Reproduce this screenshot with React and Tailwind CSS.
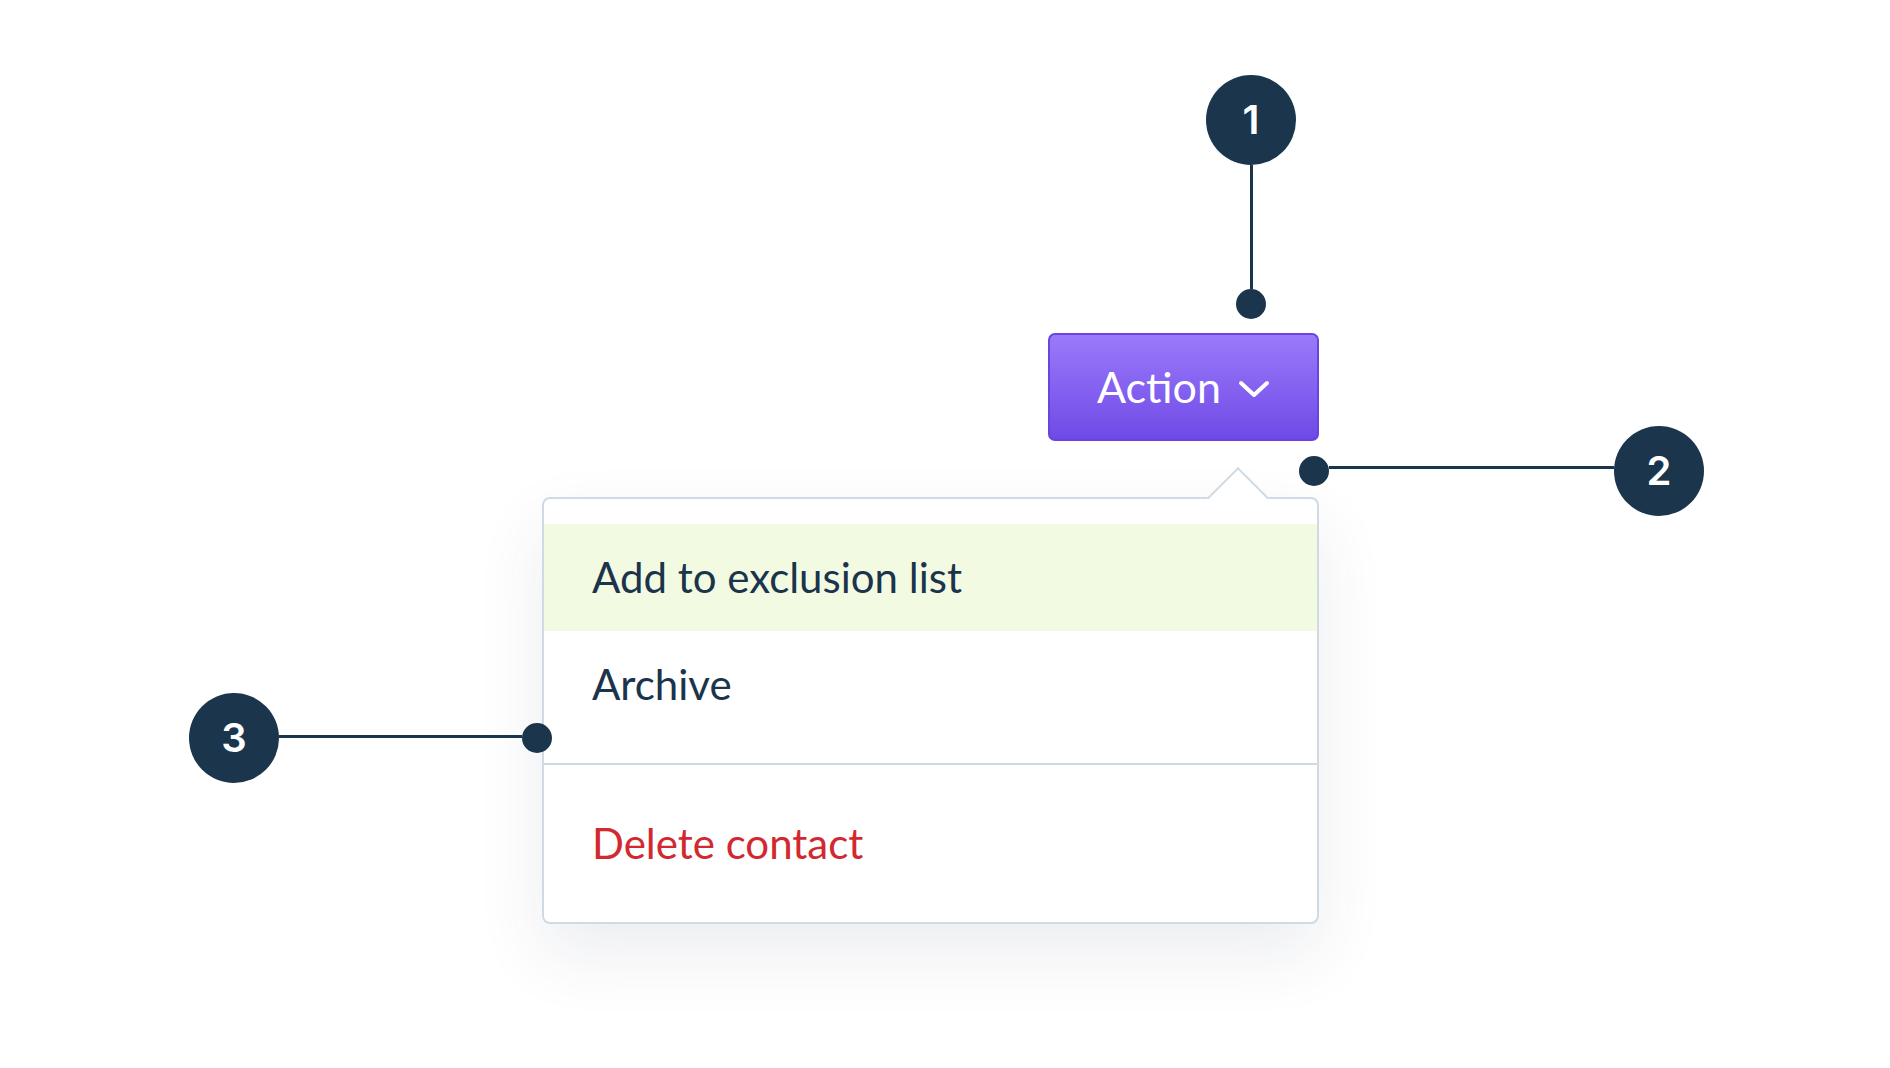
function Marker({ n }) {
  return (
    <div className="w-[90px] h-[90px] shrink-0 rounded-full bg-[#1b354c] flex items-center justify-center text-white text-[40px] font-semibold leading-none" style={{ fontFamily: 'Inter, sans-serif' }}>
      {n}
    </div>
  );
}

function Dot() {
  return <div className="w-[30px] h-[30px] shrink-0 rounded-full bg-[#1b354c]" />;
}

export default function App() {
  return (
    <div className="relative w-[1890px] h-[1068px] bg-white overflow-hidden" style={{ fontFamily: 'Lato, sans-serif' }}>
      <div className="flex flex-col items-end w-[777px] ml-[542px] pt-[333px]">
        <button className="w-[271px] h-[108px] rounded-[7px] border-2 border-[#6a44dc] bg-gradient-to-b from-[#9b79fa] to-[#7049e6] flex items-center justify-center gap-[17px] text-white text-[43px]">
          <span className="leading-none pb-[2px]">Action</span>
          <svg width="32" height="18" viewBox="0 0 32 18" fill="none" className="mt-[4px]">
            <polyline points="3,3 16,15 29,3" stroke="white" strokeWidth="4" strokeLinecap="round" strokeLinejoin="round" />
          </svg>
        </button>

        <div className="relative mt-[56px] w-full bg-white border-2 border-[#cfdae4] rounded-[8px] shadow-[0_30px_70px_rgba(40,60,90,0.09)] text-[42px]">
          <div className="absolute left-[661px] top-[-34px] w-[66px] h-[34px] overflow-hidden">
            <div className="absolute left-[11px] top-[11px] w-[44px] h-[44px] rotate-45 bg-white border-l-2 border-t-2 border-[#cfdae4]" />
          </div>
          <div className="py-[25px]">
            <div className="h-[107px] bg-[#f2fae2] flex items-center pl-[48px] text-[#1b344b]">Add to exclusion list</div>
            <div className="h-[107px] flex items-center pl-[48px] text-[#1b344b]">Archive</div>
          </div>
          <div className="border-t-2 border-[#cfdae4] py-[25px]">
            <div className="h-[107px] flex items-center pl-[48px] text-[#d1292f]">Delete contact</div>
          </div>
        </div>
      </div>

      <div className="absolute left-[1206px] top-[75px] flex flex-col items-center">
        <Marker n="1" />
        <div className="w-[3px] h-[124px] bg-[#1b354c]" />
        <Dot />
      </div>

      <div className="absolute left-[1299px] top-[426px] flex items-center">
        <Dot />
        <div className="w-[285px] h-[3px] mb-[7px] bg-[#1b354c]" />
        <Marker n="2" />
      </div>

      <div className="absolute left-[189px] top-[693px] flex items-center">
        <Marker n="3" />
        <div className="w-[243px] h-[3px] mb-[3px] bg-[#1b354c]" />
        <Dot />
      </div>
    </div>
  );
}
